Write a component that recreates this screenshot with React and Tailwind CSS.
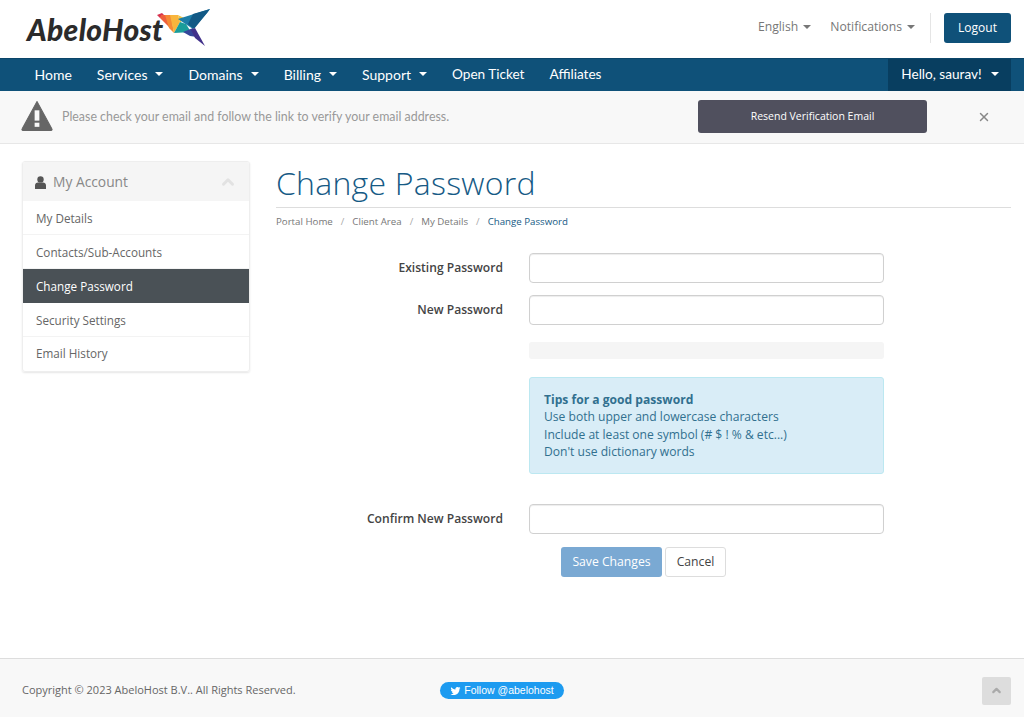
import React from "react";
import { ChevronUp, X } from "lucide-react";

const Caret = ({ className = "" }) => (
  <span className={"inline-block w-0 h-0 border-x-[4px] border-x-transparent border-t-[4px] " + className} />
);

const Logo = () => (
  <div className="flex items-center">
    <span className="font-['Lato'] italic font-black text-[30px] leading-none tracking-[0.3px] text-[#2b2b2b] -mt-[1px]">AbeloHost</span>
    <svg width="54" height="38" viewBox="0 0 54 38" className="-ml-[6px] -mt-[3px]">
      <polygon points="0,6 5,4 7,6 3,9" fill="#d8344f" />
      <polygon points="4,6 9,6 14,20 3,9" fill="#ef5f3c" />
      <polygon points="8,6 14,6 17,24 12,19" fill="#f58a35" />
      <polygon points="13,6 21,6 23,13 17,24" fill="#f9b53c" />
      <polygon points="21,6 27,9 23,14" fill="#e9c24a" />
      <polygon points="23,13 17,24 34,23 29,15" fill="#1a9d9a" />
      <polygon points="21,10 53,0 50,4 36,20 30,16" fill="#1d7ea8" />
      <polygon points="36,5 53,0 50,4 37,20 31,15" fill="#125a86" />
      <polygon points="26,23 36,19 40,28 33,27" fill="#35469a" />
      <polygon points="34,21 38,19 48,37 38,29" fill="#41308a" />
    </svg>
  </div>
);

const navItems = [
  { name: "Home", size: "text-[14px]" },
  { name: "Services", caret: true, size: "text-[14px]" },
  { name: "Domains", caret: true, size: "text-[14px]" },
  { name: "Billing", caret: true, size: "text-[14px]" },
  { name: "Support", caret: true, size: "text-[14px]" },
  { name: "Open Ticket", size: "text-[13.6px]" },
  { name: "Affiliates", size: "text-[13.6px]" },
];

const sideItems = ["My Details", "Contacts/Sub-Accounts", "Change Password", "Security Settings", "Email History"];

const Field = ({ label }) => (
  <div className="grid grid-cols-[227px_355px] gap-x-[26px] items-center h-[30px]">
    <label className="text-right text-[12.1px] font-semibold text-[#444]">{label}</label>
    <input type="password" className="h-[30px] w-full bg-white border border-[#d0d0d0] rounded-[4px] shadow-[inset_0_1px_1px_rgba(0,0,0,0.075)]" />
  </div>
);

export default function App() {
  return (
    <div className="min-h-[717px] flex flex-col bg-white font-['Open_Sans',sans-serif] text-[#555]">
      <header className="h-[58px] flex items-center justify-between pl-[27px] pr-[13px]">
        <Logo />
        <div className="flex items-center text-[12.2px] text-[#777] -mt-[3px]">
          <span className="flex items-center gap-[5px]">English <Caret className="border-t-[#777]" /></span>
          <span className="flex items-center gap-[5px] ml-[19px]">Notifications <Caret className="border-t-[#777]" /></span>
          <span className="w-px h-[30px] bg-[#e5e5e5] ml-[15px] mr-[13px]" />
          <button className="h-[30px] w-[67px] rounded-[3px] bg-[#0f5179] text-white text-[12px]">Logout</button>
        </div>
      </header>

      <nav className="h-[33px] bg-[#0f5179] border-t border-[#0b4569] flex justify-between pl-[22px] pr-[13px] text-white font-['Lato',sans-serif]">
        <ul className="flex items-center pb-[2px]">
          {navItems.map((item) => (
            <li key={item.name} className={"flex items-center gap-[8px] px-[12.5px] " + item.size}>
              {item.name}
              {item.caret && <Caret className="border-t-white" />}
            </li>
          ))}
        </ul>
        <div className="w-[123px] bg-[#083e60] flex items-center justify-center gap-[9px] pb-[2px] pl-[1px] text-[13.6px]">
          Hello, saurav! <Caret className="border-t-white" />
        </div>
      </nav>

      <div className="h-[53px] bg-[#f8f8f8] border-b border-[#e7e7e7] flex items-center pl-[22px] pr-[34px]">
        <svg width="32" height="32" viewBox="0 0 31 31" className="shrink-0 -mt-[2px] -ml-[1px]">
          <path d="M15.5 1.5 L30 28 a1 1 0 0 1 -1 1.5 H2 a1 1 0 0 1 -1 -1.5 Z" fill="#666" stroke="#666" strokeLinejoin="round" />
          <rect x="13.2" y="10" width="4.6" height="10" fill="#f8f8f8" />
          <rect x="13.2" y="22" width="4.6" height="4" fill="#f8f8f8" />
        </svg>
        <span className="ml-[9px] w-[636px] text-[12.4px] text-[#999] font-['Lato',sans-serif]">Please check your email and follow the link to verify your email address.</span>
        <button className="w-[229px] h-[33px] bg-[#50505e] rounded-[3px] text-white text-[10.5px] -mt-[1px]">Resend Verification Email</button>
        <X size={14} strokeWidth={2.5} className="ml-auto -mr-[1px] text-[#888]" />
      </div>

      <div className="flex gap-[26px] pr-[13px] pl-[22px] pt-[18px] flex-1">
        <aside className="w-[228px] shrink-0">
          <div className="rounded-[3px] border border-[#eee] shadow-[0_1px_2px_rgba(0,0,0,0.1)] overflow-hidden -mt-[1px]">
            <div className="h-[39px] bg-[#f5f5f5] flex items-center justify-between pl-[12px] pr-[12px] pt-[1px]">
              <span className="flex items-center gap-[7px] text-[13.8px] text-[#888]">
                <svg width="11" height="13" viewBox="0 0 11 13"><circle cx="5.5" cy="3.4" r="3.2" fill="#555" /><path d="M0 13V9.2C0 7.5 1.3 6.4 3 6.4h5c1.7 0 3 1.1 3 2.8V13Z" fill="#555" /></svg>
                My Account
              </span>
              <ChevronUp size={18} strokeWidth={4} className="text-[#e2e2e2]" />
            </div>
            {sideItems.map((item) => (
              <div
                key={item}
                className={
                  item === "Change Password"
                    ? "h-[34px] flex items-center pl-[13px] pt-[1px] text-[11.7px] bg-[#4a5156] text-white"
                    : "h-[34px] flex items-center pl-[13px] pt-[2px] last:pt-0 text-[11.7px] text-[#666] border-b border-[#f3f3f3] last:border-b-0"
                }
              >
                {item}
              </div>
            ))}
          </div>
        </aside>

        <main className="flex-1 min-w-0">
          <h1 className="text-[32px] leading-[41px] font-light text-[#165a85] border-b border-[#ddd] h-[46px] tracking-[0.25px]">Change Password</h1>
          <div className="flex mt-[7px] text-[9.7px] text-[#777] leading-[14px]">
            <span>Portal Home</span><span className="text-[#aaa] px-[8px]">/</span>
            <span>Client Area</span><span className="text-[#aaa] px-[8px]">/</span>
            <span>My Details</span><span className="text-[#aaa] px-[8px]">/</span>
            <span className="text-[#165a85]">Change Password</span>
          </div>

          <form className="mt-[24px]">
            <div className="flex flex-col gap-[12px]">
              <Field label="Existing Password" />
              <Field label="New Password" />
            </div>
            <div className="ml-[253px] w-[355px] mt-[17px]">
              <div className="h-[17px] bg-[#f5f5f5] rounded-[3px]" />
              <div className="mt-[18px] h-[97px] bg-[#d9edf7] border border-[#bce8f1] rounded-[3px] px-[14px] pt-[13px] text-[12.1px] leading-[17.4px] text-[#31708f]">
                <strong className="font-bold">Tips for a good password</strong>
                <br />Use both upper and lowercase characters
                <br />Include at least one symbol (# $ ! % &amp; etc...)
                <br />Don't use dictionary words
              </div>
            </div>
            <div className="mt-[30px]"><Field label="Confirm New Password" /></div>
            <div className="flex justify-center gap-[3px] mt-[13px]">
              <button type="button" className="h-[30px] w-[101px] rounded-[3px] bg-[#7aa9d3] text-white text-[12.2px]">Save Changes</button>
              <button type="button" className="h-[30px] w-[61px] rounded-[3px] bg-white border border-[#ddd] text-[#444] text-[12.2px]">Cancel</button>
            </div>
          </form>
        </main>
      </div>

      <footer className="h-[59px] bg-[#f8f8f8] border-t border-[#ddd] flex items-center pl-[22px] pr-[13px] pt-[5px] text-[11px] text-[#666]">
        <span className="w-[418px]">Copyright © 2023 AbeloHost B.V.. All Rights Reserved.</span>
        <span className="h-[17px] w-[124px] rounded-full bg-[#1d9bf0] text-white flex items-center justify-center gap-[3px] text-[10.5px] font-['Liberation_Sans',sans-serif]">
          <svg width="11" height="10" viewBox="0 0 24 24" fill="white"><path d="M23.95 4.57a10 10 0 0 1-2.82.77 4.96 4.96 0 0 0 2.16-2.72c-.95.55-2 .96-3.12 1.18a4.92 4.92 0 0 0-8.38 4.48C7.69 8.1 4.07 6.13 1.64 3.16a4.82 4.82 0 0 0-.66 2.47c0 1.71.87 3.21 2.19 4.1a4.9 4.9 0 0 1-2.23-.61v.06a4.92 4.92 0 0 0 3.95 4.83 5 5 0 0 1-2.21.08 4.94 4.94 0 0 0 4.6 3.42A9.87 9.87 0 0 1 0 19.54a14 14 0 0 0 7.56 2.21c9.05 0 14-7.5 14-13.98 0-.21 0-.42-.02-.63a9.94 9.94 0 0 0 2.41-2.57Z" /></svg>
          Follow @abelohost
        </span>
        <span className="ml-auto w-[29px] h-[28px] rounded-[2px] bg-[#ddd] flex items-center justify-center">
          <ChevronUp size={13} strokeWidth={4} className="text-[#aaa]" />
        </span>
      </footer>
    </div>
  );
}
